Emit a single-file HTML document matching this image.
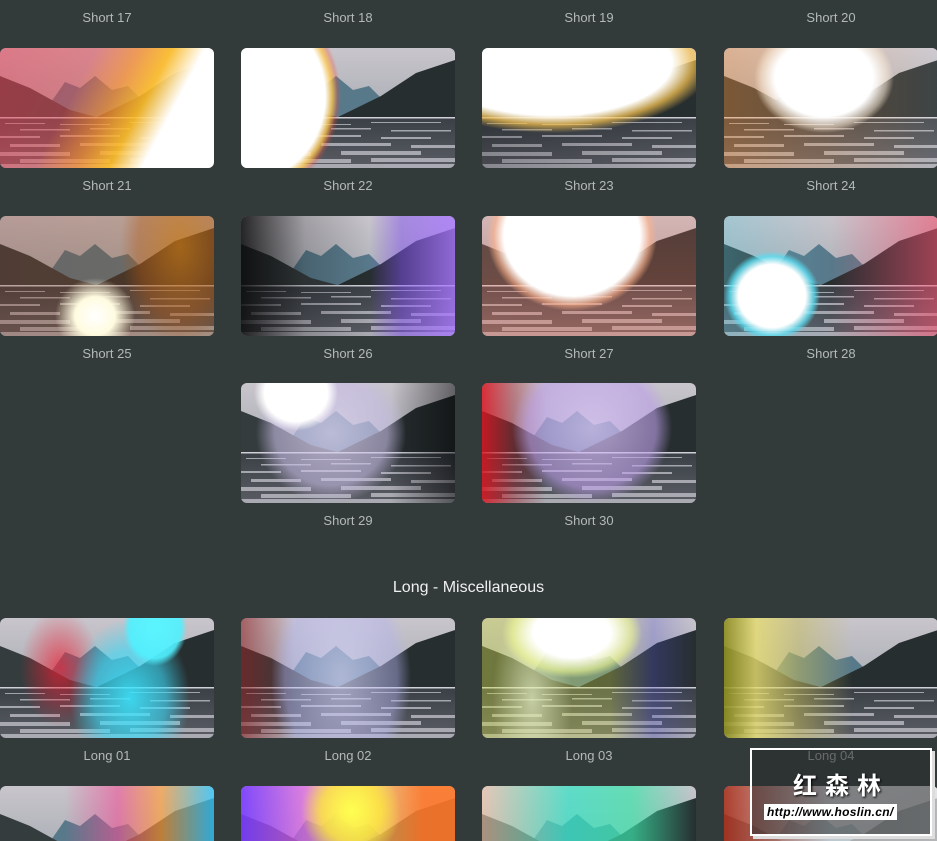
<!DOCTYPE html>
<html><head><meta charset="utf-8">
<style>
html,body{margin:0;padding:0;background:#333a3a;width:937px;height:841px;overflow:hidden;position:relative;font-family:"Liberation Sans",sans-serif}
.t{position:absolute;width:214px;height:120px;border-radius:6px;overflow:hidden}
.t svg{position:absolute;left:0;top:0;width:214px;height:120px}
.t .o{position:absolute;inset:0}
.b{height:55px;border-radius:6px 6px 0 0}
.b svg{height:55px}
.l{position:absolute;width:214px;text-align:center;color:#b4b8b8;font-size:13px}
h2{position:absolute;left:0;width:937px;top:579px;margin:0;text-align:center;color:#f0f0f0;font-weight:normal;font-size:16px}
.wm{position:absolute;left:750px;top:748px;width:178px;height:84px;border:2px solid #fff;background:rgba(40,44,46,.55);box-shadow:3px 3px 0 #ddd}
.wm .c{position:absolute;left:0;width:100%;top:16px;text-align:center;color:#fff;font:bold 24px "Noto Sans CJK SC",sans-serif;letter-spacing:8px;text-shadow:1px 1px 2px #000}
.wm .u{position:absolute;left:12px;top:54px;background:#fff;color:#000;font:italic bold 12px "Liberation Sans",sans-serif;padding:1px 3px;letter-spacing:.3px}
</style></head><body>
<svg width="0" height="0" style="position:absolute">
<defs>
<linearGradient id="sky" x1="0" y1="0" x2="0" y2="1"><stop offset="0" stop-color="#c9c5cc"/><stop offset="1" stop-color="#a8adb4"/></linearGradient>
<linearGradient id="wat" x1="0" y1="0" x2="0" y2="1"><stop offset="0" stop-color="#3a4046"/><stop offset="1" stop-color="#5a5c64"/></linearGradient>
<symbol id="land" viewBox="0 0 214 120">
<rect width="214" height="70" fill="url(#sky)"/>
<path d="M40 70 L65 34 L80 40 L95 28 L112 42 L128 38 L150 60 L150 70Z" fill="#58798a"/>
<path d="M0 28 L30 40 L70 62 L100 70 L0 70Z" fill="#353c3e"/>
<path d="M95 70 L140 48 L175 25 L214 12 L214 70Z" fill="#272e30"/>
<rect y="70" width="214" height="50" fill="url(#wat)"/>
<g fill="#c4c4cc" opacity=".75">
<rect x="5" y="75" width="40" height="1"/><rect x="60" y="76" width="50" height="1"/><rect x="130" y="74" width="70" height="1"/>
<rect x="20" y="81" width="50" height="1.5"/><rect x="90" y="80" width="40" height="1.5"/><rect x="150" y="82" width="60" height="1.5"/>
<rect x="0" y="88" width="40" height="2"/><rect x="60" y="87" width="60" height="2"/><rect x="140" y="89" width="50" height="2"/>
<rect x="10" y="96" width="50" height="3"/><rect x="80" y="95" width="70" height="3"/><rect x="170" y="97" width="44" height="3"/>
<rect x="0" y="104" width="70" height="4"/><rect x="100" y="103" width="80" height="4"/>
<rect x="20" y="111" width="90" height="4"/><rect x="130" y="110" width="84" height="4"/>
<rect x="0" y="116" width="214" height="4"/>
</g>
<rect y="69" width="214" height="1.5" fill="#d0d0d8"/>
</symbol>
</defs></svg>

<div class="t" style="left:0;top:-120px"><svg><use href="#land"/></svg></div>
<div class="t" style="left:241px;top:-120px"><svg><use href="#land"/></svg></div>
<div class="t" style="left:482px;top:-120px"><svg><use href="#land"/></svg></div>
<div class="t" style="left:724px;top:-120px"><svg><use href="#land"/></svg></div>
<div class="l" style="left:0;top:10px">Short 17</div>
<div class="l" style="left:241px;top:10px">Short 18</div>
<div class="l" style="left:482px;top:10px">Short 19</div>
<div class="l" style="left:724px;top:10px">Short 20</div>

<div class="t" style="left:0;top:48px"><svg><use href="#land"/></svg><div class="o" style="background:linear-gradient(118deg,rgba(235,60,80,.55) 0,rgba(235,70,80,.5) 35%,rgba(250,140,50,.75) 50%,rgba(255,190,40,.9) 62%,#fff 74%,#fff 100%)"></div></div>
<div class="t" style="left:241px;top:48px"><svg><use href="#land"/></svg><div class="o" style="background:radial-gradient(ellipse 88px 100px at 12px 48px,#fff 0,#fff 82%,rgba(255,200,80,.8) 90%,rgba(255,80,60,.3) 96%,rgba(255,80,40,0) 100%)"></div></div>
<div class="t" style="left:482px;top:48px"><svg><use href="#land"/></svg><div class="o" style="background:radial-gradient(ellipse 160px 70px at 70px 15px,#fff 0,#fff 75%,rgba(255,200,80,.7) 88%,rgba(255,90,60,0) 100%),linear-gradient(90deg,rgba(0,0,0,.2),rgba(0,0,0,0))"></div></div>
<div class="t" style="left:724px;top:48px"><svg><use href="#land"/></svg><div class="o" style="background:radial-gradient(ellipse 70px 55px at 100px 30px,#fff 0,#fff 70%,rgba(255,240,220,.5) 90%,rgba(255,255,255,0) 100%),linear-gradient(90deg,rgba(255,140,40,.35),rgba(255,255,255,.1))"></div></div>
<div class="l" style="left:0;top:178px">Short 21</div>
<div class="l" style="left:241px;top:178px">Short 22</div>
<div class="l" style="left:482px;top:178px">Short 23</div>
<div class="l" style="left:724px;top:178px">Short 24</div>

<div class="t" style="left:0;top:216px"><svg><use href="#land"/></svg><div class="o" style="background:radial-gradient(ellipse 40px 38px at 95px 100px,#fff 0,#fffbe0 50%,rgba(255,200,100,0) 100%),radial-gradient(ellipse 60px 100px at 180px 30px,rgba(200,120,20,.7) 0,rgba(180,90,20,.4) 70%,rgba(0,0,0,0) 100%),linear-gradient(90deg,rgba(140,60,30,.3),rgba(150,80,20,.3))"></div></div>
<div class="t" style="left:241px;top:216px"><svg><use href="#land"/></svg><div class="o" style="background:linear-gradient(90deg,rgba(10,10,10,.85) 0,rgba(10,10,10,.2) 30%,rgba(0,0,0,0) 60%,rgba(130,80,240,.5) 75%,rgba(170,120,255,.8) 100%)"></div></div>
<div class="t" style="left:482px;top:216px"><svg><use href="#land"/></svg><div class="o" style="background:radial-gradient(ellipse 85px 75px at 90px 20px,#fff 0,#fff 80%,rgba(255,180,140,.6) 92%,rgba(255,120,100,0) 100%),linear-gradient(0deg,rgba(255,120,90,.35),rgba(255,120,90,.2))"></div></div>
<div class="t" style="left:724px;top:216px"><svg><use href="#land"/></svg><div class="o" style="background:radial-gradient(ellipse 48px 45px at 48px 80px,#fff 0,#fff 70%,rgba(90,220,240,.8) 88%,rgba(80,200,240,0) 100%),linear-gradient(90deg,rgba(80,200,220,.3),rgba(0,0,0,0) 50%,rgba(240,80,110,.6) 100%)"></div></div>
<div class="l" style="left:0;top:346px">Short 25</div>
<div class="l" style="left:241px;top:346px">Short 26</div>
<div class="l" style="left:482px;top:346px">Short 27</div>
<div class="l" style="left:724px;top:346px">Short 28</div>

<div class="t" style="left:241px;top:383px"><svg><use href="#land"/></svg><div class="o" style="background:radial-gradient(ellipse 42px 38px at 55px 10px,#fff 0,#fff 75%,rgba(255,255,255,0) 100%),radial-gradient(ellipse 75px 70px at 90px 50px,rgba(220,210,240,.75) 0,rgba(200,190,230,.6) 75%,rgba(0,0,0,0) 100%),linear-gradient(90deg,rgba(0,0,0,0) 70%,rgba(0,0,0,.5))"></div></div>
<div class="t" style="left:482px;top:383px"><svg><use href="#land"/></svg><div class="o" style="background:radial-gradient(ellipse 80px 75px at 110px 45px,rgba(215,195,245,.75) 0,rgba(190,160,235,.6) 80%,rgba(0,0,0,0) 100%),linear-gradient(90deg,rgba(220,20,30,.85) 0,rgba(160,20,30,.4) 15%,rgba(0,0,0,0) 30%)"></div></div>
<div class="l" style="left:241px;top:513px">Short 29</div>
<div class="l" style="left:482px;top:513px">Short 30</div>

<h2>Long - Miscellaneous</h2>

<div class="t" style="left:0;top:618px"><svg><use href="#land"/></svg><div class="o" style="background:radial-gradient(ellipse 32px 38px at 155px 10px,rgba(90,245,255,1) 0,rgba(80,240,255,.9) 80%,rgba(0,0,0,0) 100%),radial-gradient(ellipse 60px 80px at 130px 80px,rgba(60,230,255,.9) 0,rgba(60,220,250,.6) 60%,rgba(0,0,0,0) 100%),radial-gradient(ellipse 40px 60px at 60px 50px,rgba(240,30,50,.7) 0,rgba(0,0,0,0) 100%)"></div></div>
<div class="t" style="left:241px;top:618px"><svg><use href="#land"/></svg><div class="o" style="background:radial-gradient(ellipse 70px 110px at 100px 60px,rgba(210,210,245,.7) 0,rgba(180,180,240,.45) 80%,rgba(0,0,0,0) 100%),linear-gradient(90deg,rgba(140,30,30,.6),rgba(0,0,0,0) 25%)"></div></div>
<div class="t" style="left:482px;top:618px"><svg><use href="#land"/></svg><div class="o" style="background:radial-gradient(ellipse 70px 45px at 90px 15px,#fff 0,#fff 55%,rgba(240,250,150,.6) 85%,rgba(0,0,0,0) 100%),radial-gradient(ellipse 40px 90px at 50px 80px,rgba(230,240,200,.7) 0,rgba(0,0,0,0) 100%),linear-gradient(90deg,rgba(200,210,60,.4),rgba(220,230,80,.3) 60%,rgba(80,80,200,.3) 80%,rgba(0,0,0,0))"></div></div>
<div class="t" style="left:724px;top:618px"><svg><use href="#land"/></svg><div class="o" style="background:linear-gradient(90deg,rgba(140,140,30,.9) 0,rgba(230,220,110,.8) 15%,rgba(200,190,90,.5) 35%,rgba(0,0,0,0) 60%)"></div></div>
<div class="l" style="left:0;top:748px">Long 01</div>
<div class="l" style="left:241px;top:748px">Long 02</div>
<div class="l" style="left:482px;top:748px">Long 03</div>
<div class="l" style="left:724px;top:748px">Long 04</div>

<div class="t b" style="left:0;top:786px"><svg viewBox="0 0 214 55"><use href="#land" width="214" height="120"/></svg><div class="o" style="background:linear-gradient(90deg,rgba(0,0,0,0) 30%,rgba(240,80,150,.6) 55%,rgba(255,160,60,.7) 75%,rgba(50,200,255,.8) 100%)"></div></div>
<div class="t b" style="left:241px;top:786px"><svg viewBox="0 0 214 55"><use href="#land" width="214" height="120"/></svg><div class="o" style="background:radial-gradient(ellipse 50px 50px at 110px 25px,rgba(255,255,80,1) 0,rgba(255,230,60,.8) 60%,rgba(0,0,0,0) 100%),linear-gradient(90deg,rgba(120,60,255,.9) 0,rgba(230,100,230,.7) 30%,rgba(255,230,120,.6) 55%,rgba(255,120,40,.9) 85%)"></div></div>
<div class="t b" style="left:482px;top:786px"><svg viewBox="0 0 214 55"><use href="#land" width="214" height="120"/></svg><div class="o" style="background:linear-gradient(90deg,rgba(250,200,170,.6) 0,rgba(50,230,200,.7) 40%,rgba(60,230,170,.7) 70%,rgba(0,0,0,0) 100%)"></div></div>
<div class="t b" style="left:724px;top:786px"><svg viewBox="0 0 214 55"><use href="#land" width="214" height="120"/></svg><div class="o" style="background:linear-gradient(90deg,rgba(170,50,30,.9),rgba(255,255,255,.6) 50%,rgba(240,240,240,.7))"></div></div>

<div class="wm"><div class="c">红森林</div><div class="u">http://www.hoslin.cn/</div></div>
</body></html>
